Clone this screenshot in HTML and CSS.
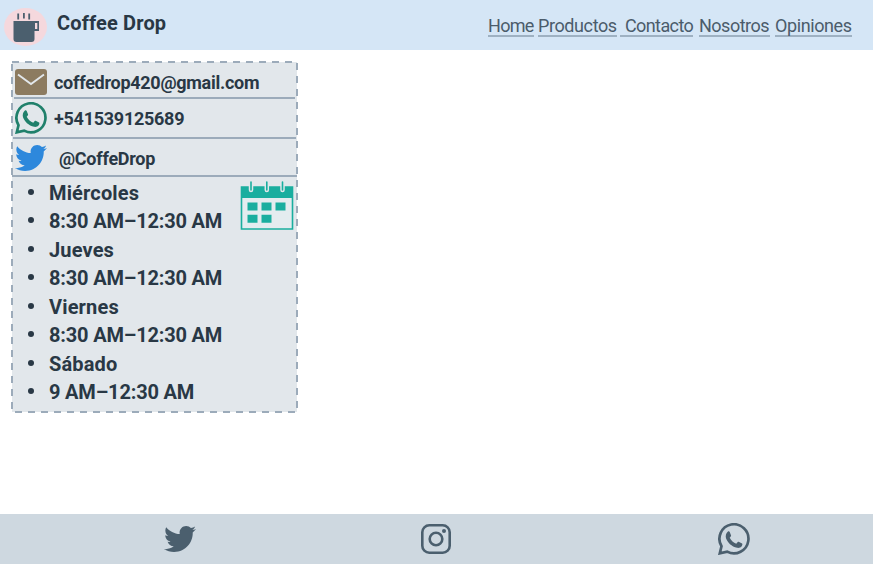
FILE: index.html
```html
<!DOCTYPE html>
<html lang="es">
<head>
<meta charset="utf-8">
<title>Coffee Drop</title>
<link rel="stylesheet" href="styles.css">
</head>
<body>
<svg class="sprite" aria-hidden="true">
  <symbol id="twitter" viewBox="0 48 512 416" preserveAspectRatio="none"><path d="M459.4 151.7c.3 4.5.3 9.1.3 13.6 0 138.7-105.6 298.6-298.6 298.6-59.500 0-114.700-17.200-161.100-47.100 8.400 1 16.600 1.300 25.300 1.300 49.100 0 94.200-16.600 130.300-44.800-46.100-1-84.800-31.200-98.100-72.800 6.500 1 13 1.600 19.800 1.600 9.400 0 18.800-1.300 27.600-3.600-48.100-9.700-84.100-52-84.100-103v-1.300c14 7.800 30.200 12.700 47.400 13.300-28.300-18.800-46.800-51-46.800-87.400 0-19.500 5.200-37.400 14.300-53 51.700 63.700 129.300 105.300 216.400 109.800-1.600-7.800-2.600-15.900-2.600-24 0-57.800 46.800-104.900 104.900-104.900 30.200 0 57.500 12.700 76.700 33.100 23.700-4.500 46.500-13.300 66.600-25.300-7.800 24.400-24.400 44.800-46.100 57.800 21.100-2.300 41.600-8.100 60.400-16.200-14.300 20.800-32.200 39.300-52.600 54.300z"/></symbol>
  <symbol id="whatsapp" viewBox="0 0 32 32"><path fill="none" stroke="currentColor" stroke-width="2.700" d="M1.800 30.300 3.500 23.200A14.500 14.500 0 1 1 9.200 28.600Z"/><path d="M9.700 8.700c.8-.5 1.600-.5 2 .4l1.300 3.100c.3.700-.2 1.300-1.300 2.600 1.600 3 3.700 4.800 6.600 5.900 1.300-1.700 1.700-2.200 2.300-2l3.500 1.700c.6.4.2 2-.4 2.900-.9 1.200-3 1.900-4.600 1.500-5.600-1.300-9.600-5.400-11.100-9.600-.7-2.300.1-5.300 1.700-6.500z"/></symbol>
</svg>
<header class="topbar">
  <div class="brand">
    <svg class="logo" viewBox="0 0 43 38"><ellipse cx="21.500" cy="19" rx="21.500" ry="19" fill="#f5d8dd"/><path fill="#4b5f6e" d="M9.500 13h25.500v10h-4.500v8q0 3-3 3H12.500q-3 0-3-3zM31 15v6h2.300v-6zM13.300 5.500h1.800v6h-1.800zM19 5h1.800v5.500h-1.800zM24.300 5.500h1.800v6h-1.800z"/></svg>
    <h1 class="title">Coffee Drop</h1>
  </div>
  <nav class="nav">
    <a class="link home">Home</a>
    <a class="link products">Productos</a>
    <a class="link contact">Contacto</a>
    <a class="link us">Nosotros</a>
    <a class="link reviews">Opiniones</a>
  </nav>
</header>
<main class="main">
  <section class="card">
    <svg class="outline" viewBox="0 0 287 352"><rect x="1" y="1" width="285" height="350"/></svg>
    <div class="row mail">
      <svg class="icon" viewBox="0 0 32 26"><rect width="32" height="26" rx="3" fill="#8c7b60"/><path d="M3 5.500 16 15 29 5.500" fill="none" stroke="#e2e7eb" stroke-width="1.900"/></svg>
      <span class="text">coffedrop420@gmail.com</span>
    </div>
    <div class="row phone">
      <svg class="icon"><use href="#whatsapp"/></svg>
      <span class="text">+541539125689</span>
    </div>
    <div class="row tweet">
      <svg class="icon"><use href="#twitter"/></svg>
      <span class="text">@CoffeDrop</span>
    </div>
    <div class="hours">
      <ul class="list">
        <li class="day">Miércoles</li>
        <li class="time">8:30 AM–12:30 AM</li>
        <li class="day">Jueves</li>
        <li class="time">8:30 AM–12:30 AM</li>
        <li class="day">Viernes</li>
        <li class="time">8:30 AM–12:30 AM</li>
        <li class="day">Sábado</li>
        <li class="time">9 AM–12:30 AM</li>
      </ul>
      <svg class="calendar" viewBox="0 0 54 50"><path d="M1.500 6h51v42h-51z" fill="#e4ecef" stroke="#1aae9f" stroke-width="1.600"/><path d="M1 6h52v11H1z" fill="#1aae9f"/><path d="M11 1v8M26.800 1v8M42.500 1v8" stroke="#e2e7eb" stroke-width="4.500" stroke-linecap="round"/><path d="M11 1v8M26.800 1v8M42.500 1v8" stroke="#1aae9f" stroke-width="1.600" stroke-linecap="round"/><path d="M7.500 21.500h10v8h-10zM21.500 21.500h10v8h-10zM35.500 21.500h10v8h-10zM7.500 33.700h10v8h-10zM21.500 33.700h10v8h-10z" fill="#1aae9f"/></svg>
    </div>
  </section>
</main>
<footer class="footer">
  <svg class="social bird"><use href="#twitter"/></svg>
  <svg class="social camera" viewBox="0 0 30 30"><rect x="1.300" y="1.300" width="27.400" height="27.400" rx="7"/><circle cx="15" cy="15" r="6.300"/><circle class="dot" cx="23" cy="7" r="2"/></svg>
  <svg class="social chat"><use href="#whatsapp"/></svg>
</footer>
</body>
</html>
```
FILE: styles.css
```css
* { box-sizing: border-box; }
body {
  margin: 0;
  height: 564px;
  display: flex;
  flex-direction: column;
  font-family: Roboto, "Liberation Sans", sans-serif;
  color: #293845;
  background: #fff;
  overflow: hidden;
}
.sprite { display: none; }
svg { display: block; flex: none; }
.topbar {
  height: 50px;
  flex: none;
  display: flex;
  justify-content: space-between;
  background: #d5e6f6;
}
.brand { display: flex; align-items: flex-start; padding: 8px 0 0 4px; }
.logo { width: 43px; height: 38px; }
.title { margin: 3px 0 0 10px; font-size: 20px; line-height: 24px; font-weight: 700; letter-spacing: .15px; white-space: nowrap; }
.nav { display: flex; align-items: flex-start; padding: 16px 21px 0 0; }
.link {
  height: 21px;
  line-height: 20px;
  font-size: 18px;
  letter-spacing: -.4px;
  color: #4b5c6b;
  border-bottom: 2px solid #9eb1c2;
  white-space: nowrap;
}
.home { width: 46px; margin-right: 4px; letter-spacing: -.7px; }
.products { width: 79px; margin-right: 3px; }
.contact { width: 73px; margin-right: 6px; padding-left: 5px; letter-spacing: -.6px; }
.us { width: 71px; margin-right: 5px; letter-spacing: -.5px; }
.reviews { width: 77px; }
.main { flex: 1; padding: 11px; }
.card {
  position: relative;
  width: 287px;
  height: 352px;
  padding: 1px;
  background: linear-gradient(#e2e7eb, #e2e7eb) 1px 1px / 285px 350px no-repeat;
}
.outline { position: absolute; inset: 0; width: 287px; height: 352px; pointer-events: none; }
.outline rect { fill: none; stroke: #9cabba; stroke-width: 2; stroke-dasharray: 7 6; }
.row { display: flex; align-items: center; border-bottom: 2px solid #9cabba; font-size: 18px; font-weight: 700; letter-spacing: -.27px; white-space: nowrap; }
.icon { width: 32px; }
.text { line-height: 22px; }
.mail { height: 37px; margin: 0 2px; padding: 5px 0 0 1px; }
.mail .icon { height: 26px; }
.mail .text { margin: 1px 0 0 7px; }
.phone { height: 40px; margin: 0 1px; padding-left: 2px; color: #20806b; }
.phone .icon { height: 32px; fill: currentColor; }
.phone .text, .tweet .text { color: #293845; }
.phone .text { margin: 2px 0 0 7px; }
.tweet { height: 38px; padding-left: 3px; color: #2d88dc; }
.tweet .icon { height: 26px; fill: currentColor; margin-top: 1px; }
.tweet .text { margin: 4px 0 0 12px; }
.hours { display: flex; }
.list { width: 228px; margin: 2px 0 0; padding: 0; list-style: none; font-size: 20px; font-weight: 700; line-height: 28px; }
.list li { display: flex; align-items: center; white-space: nowrap; }
.list .day { height: 28px; letter-spacing: .15px; }
.list .time { height: 29px; padding-bottom: 1px; letter-spacing: -.18px; }
.list li::before { content: ""; width: 6px; height: 6px; margin: -2px 15px 0 16px; border-radius: 50%; background: #293845; }
.calendar { width: 54px; height: 50px; margin-top: 4px; }
.footer {
  height: 50px;
  flex: none;
  display: flex;
  align-items: center;
  background: #ced8e0;
  color: #4b5f6e;
}
.social { fill: currentColor; }
.bird { width: 32px; height: 26px; margin-left: 164px; }
.camera { width: 30px; height: 30px; margin-left: 225px; fill: none; stroke: currentColor; stroke-width: 2.600; }
.camera .dot { fill: currentColor; stroke: none; }
.chat { width: 32px; height: 32px; margin-left: 267px; }
```
